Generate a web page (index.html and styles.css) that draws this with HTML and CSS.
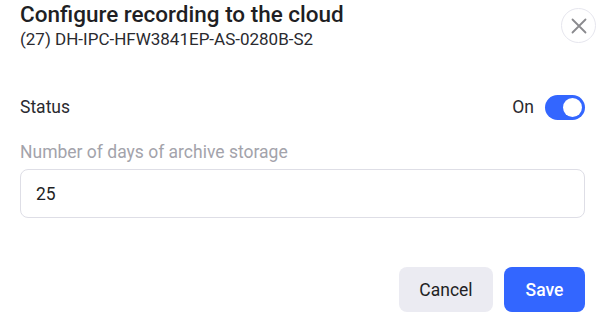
FILE: index.html
```html
<!DOCTYPE html>
<html>
<head>
<meta charset="utf-8">
<link rel="stylesheet" href="styles.css">
</head>
<body>
<div class="dialog">
  <div class="header">
    <div class="titles">
      <h1 class="title">Configure recording to the cloud</h1>
      <div class="subtitle">(27) DH-IPC-HFW3841EP-AS-0280B-S2</div>
    </div>
    <button class="close" aria-label="Close">
      <svg width="16" height="16" viewBox="0 0 16 16"><path d="M1.5 1.5L14.5 14.5M14.5 1.5L1.5 14.5" stroke="#8a8a8e" stroke-width="1.8" stroke-linecap="round" fill="none"/></svg>
    </button>
  </div>
  <div class="status-row">
    <span class="label">Status</span>
    <div class="toggle-wrap">
      <span class="on">On</span>
      <span class="toggle"><span class="knob"></span></span>
    </div>
  </div>
  <div class="field">
    <div class="field-label">Number of days of archive storage</div>
    <div class="input">25</div>
  </div>
  <div class="actions">
    <button class="btn cancel">Cancel</button>
    <button class="btn save">Save</button>
  </div>
</div>
</body>
</html>
```
FILE: styles.css
```css
* { box-sizing: border-box; }
html, body { margin: 0; padding: 0; background: #fff; }
body { font-family: Roboto, "Noto Sans", sans-serif; color: #1f1f24; }
.dialog { width: 604px; height: 322px; padding: 0 19px 0 20px; display: flex; flex-direction: column; }
.header { display: flex; justify-content: space-between; align-items: flex-start; }
.title { margin: 0; font-size: 22.5px; font-weight: 500; line-height: 28px; color: #1f1f24; }
.subtitle { font-size: 17px; line-height: 23px; color: #2a2a2f; }
.close { width: 35px; height: 35px; border-radius: 50%; border: 1px solid #e6e6ee; background: #fff; margin: 8px -11px 0 0; padding: 0; display: flex; align-items: center; justify-content: center; }
.status-row { display: flex; justify-content: space-between; align-items: center; margin-top: 43px; height: 26px; }
.label { font-size: 17.5px; color: #2a2a2f; }
.toggle-wrap { display: flex; align-items: center; gap: 11px; }
.on { font-size: 17.5px; color: #2a2a2f; }
.toggle { width: 40px; height: 25px; border-radius: 13px; background: #3366ff; display: flex; align-items: center; justify-content: flex-end; padding-right: 3px; }
.knob { width: 19px; height: 19px; border-radius: 50%; background: #fff; }
.field { margin-top: 20px; }
.field-label { font-size: 17.5px; color: #a3a3ab; line-height: 24px; }
.input { margin-top: 5px; height: 49px; border: 1px solid #dedee6; border-radius: 8px; padding: 0 15px; display: flex; align-items: center; font-size: 17.5px; color: #1f1f24; }
.actions { display: flex; justify-content: flex-end; gap: 11px; margin-top: 49px; }
.btn { font-family: Roboto, "Noto Sans", sans-serif; font-size: 17.5px; height: 45px; border: none; border-radius: 8px; padding: 0; }
.cancel { width: 94px; background: #ebebf2; color: #1f1f24; }
.save { width: 81px; background: #3366ff; color: #fff; font-weight: 500; }
```
